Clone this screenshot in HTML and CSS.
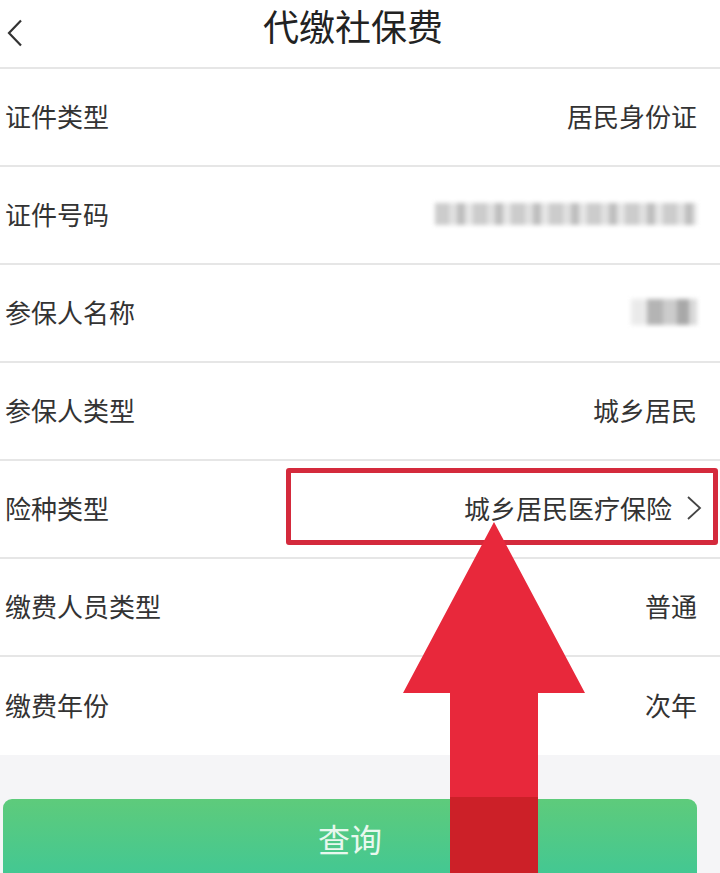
FILE: index.html
```html
<!DOCTYPE html>
<html lang="zh-CN">
<head>
    <meta charset="UTF-8">
    <meta name="viewport" content="width=device-width, initial-scale=1.0">
    <title>代缴社保费</title>
    <link rel="stylesheet" href="styles.css">
</head>
<body>

    <div class="page">
        <header class="topbar">
            <span class="back">
                <svg width="18" height="28" viewBox="0 0 18 28">
                    <path d="M15 1.5 L3 14 L15 26.5" fill="none" stroke="#333" stroke-width="2.2"/>
                </svg>
            </span>
            <h1 class="title">代缴社保费</h1>
        </header>

        <ul class="form">
            <li class="row">
                <span class="label">证件类型</span>
                <span class="value">居民身份证</span>
            </li>
            <li class="row">
                <span class="label">证件号码</span>
                <span class="value"><span class="masked masked-id"></span></span>
            </li>
            <li class="row">
                <span class="label">参保人名称</span>
                <span class="value"><span class="masked masked-name"></span></span>
            </li>
            <li class="row">
                <span class="label">参保人类型</span>
                <span class="value">城乡居民</span>
            </li>
            <li class="row">
                <span class="label">险种类型</span>
                <span class="value value-link">
                    城乡居民医疗保险
                    <svg class="arrow-right" width="16" height="26" viewBox="0 0 16 26">
                        <path d="M2 2 L14 13 L2 24" fill="none" stroke="#444" stroke-width="1.8"/>
                    </svg>
                </span>
            </li>
            <li class="row">
                <span class="label">缴费人员类型</span>
                <span class="value">普通</span>
            </li>
            <li class="row last">
                <span class="label">缴费年份</span>
                <span class="value">次年</span>
            </li>
        </ul>

        <div class="footer">
            <button class="btn-query">查询</button>
        </div>

        <!-- annotation -->
        <div class="mark-box"></div>
        <svg class="mark-arrow" width="720" height="873" viewBox="0 0 720 873">
            <polygon points="494,522 585,693 538,693 538,873 450,873 450,693 403,693" fill="#e8283b"/>
            <rect x="450" y="797" width="88" height="76" fill="#cc2028"/>
        </svg>
    </div>

</body>
</html>
```

FILE: styles.css
```css
body, html {
    margin: 0;
    padding: 0;
    background: #fff;
    font-family: "Noto Sans CJK SC", "Noto Sans", sans-serif;
    color: #333;
}

.page {
    position: relative;
    width: 720px;
    height: 873px;
    overflow: hidden;
}

.topbar {
    display: flex;
    align-items: center;
    height: 67px;
    border-bottom: 2px solid #e6e6e6;
    padding: 0 20px 0 6px;
}

.back {
    display: flex;
    width: 30px;
    margin-top: -2px;
}

.title {
    flex: 1;
    margin: -18px 30px 0 0;
    text-align: center;
    font-size: 36px;
    font-weight: 400;
    color: #222;
}

.form {
    list-style: none;
    margin: 0;
    padding: 0;
}

.row {
    display: flex;
    align-items: center;
    justify-content: space-between;
    height: 96px;
    border-bottom: 2px solid #e6e6e6;
    padding: 0 23px 3px 5px;
    box-sizing: border-box;
    height: 98px;
    font-size: 26px;
}

.row.last {
    border-bottom: none;
}

.value {
    display: flex;
    align-items: center;
}

.value-link {
    margin-right: -5px;
}

.arrow-right {
    margin-left: 14px;
}

.masked {
    display: block;
    filter: blur(2px);
    opacity: 0.75;
}

.masked-id {
    width: 262px;
    height: 22px;
    background:
        repeating-linear-gradient(90deg, #bbb 0 14px, #d6d6d6 14px 22px, #a9a9a9 22px 30px, #ddd 30px 38px);
}

.masked-name {
    width: 66px;
    height: 26px;
    background:
        linear-gradient(90deg, #e4e4e4 0 16px, #9c9c9c 16px 32px, #bbb 32px 46px, #8c8c8c 46px 58px, #ccc 58px);
}

.footer {
    background: #f5f5f7;
    height: 120px;
    padding: 44px 23px 0 3px;
}

.btn-query {
    display: block;
    width: 100%;
    height: 90px;
    border: none;
    border-radius: 9px;
    background: linear-gradient(180deg, #5ecb7b 0%, #3ec797 100%);
    color: #e8f8ee;
    font-family: inherit;
    font-size: 32px;
    padding-bottom: 14px;
}

.mark-box {
    position: absolute;
    left: 286px;
    top: 468px;
    width: 422px;
    height: 67px;
    border: 5px solid #d42a3c;
    border-radius: 3px;
}

.mark-arrow {
    position: absolute;
    left: 0;
    top: 0;
}
```
